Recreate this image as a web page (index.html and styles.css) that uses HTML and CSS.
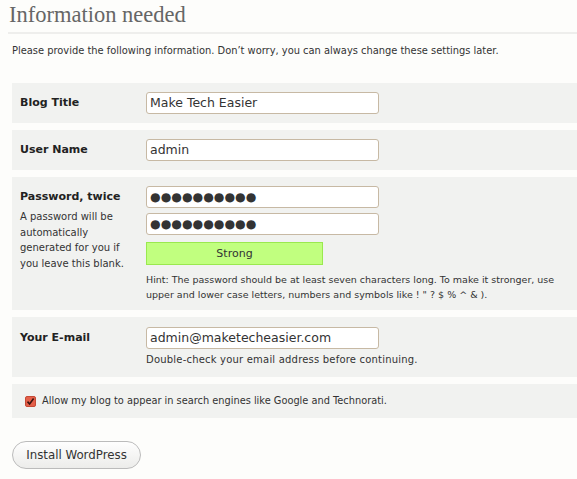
FILE: index.html
```html
<!DOCTYPE html>
<html>
<head>
<meta charset="utf-8">
<link rel="stylesheet" href="styles.css">
</head>
<body>
<h1 class="title">Information needed</h1>
<p class="intro">Please provide the following information. Don’t worry, you can always change these settings later.</p>
<form class="form">
  <div class="row">
    <div class="label"><span class="lbl">Blog Title</span></div>
    <div class="field"><input class="text" type="text" value="Make Tech Easier"></div>
  </div>
  <div class="row">
    <div class="label"><span class="lbl">User Name</span></div>
    <div class="field"><input class="text" type="text" value="admin"></div>
  </div>
  <div class="row row-pass">
    <div class="label">
      <span class="lbl">Password, twice</span>
      <p class="desc">A password will be automatically generated for you if you leave this blank.</p>
    </div>
    <div class="field">
      <input class="text dots" type="text" value="●●●●●●●●●●">
      <input class="text dots" type="text" value="●●●●●●●●●●">
      <div class="strength">Strong</div>
      <p class="hint">Hint: The password should be at least seven characters long. To make it stronger, use upper and lower case letters, numbers and symbols like ! " ? $ % ^ &amp; ).</p>
    </div>
  </div>
  <div class="row row-mail">
    <div class="label"><span class="lbl">Your E-mail</span></div>
    <div class="field">
      <input class="text" type="text" value="admin@maketecheasier.com">
      <p class="hint-mail">Double-check your email address before continuing.</p>
    </div>
  </div>
  <div class="row row-check">
    <label class="check">
      <span class="box"><svg width="9" height="9" viewBox="0 0 9 9"><path d="M1.5 4.6 L3.6 7 L7.6 1.6" fill="none" stroke="#3a1410" stroke-width="1.6"/></svg></span>
      Allow my blog to appear in search engines like Google and Technorati.
    </label>
  </div>
  <div class="actions"><button type="button" class="btn">Install WordPress</button></div>
</form>
</body>
</html>
```
FILE: styles.css
```css
html, body {
  margin: 0;
  padding: 0;
  background: #fdfdfb;
}
body {
  font-family: "DejaVu Sans", Verdana, sans-serif;
  color: #333;
  font-size: 11px;
}
.title {
  font-family: "Liberation Serif", Georgia, serif;
  font-weight: normal;
  font-size: 22.5px;
  color: #666;
  margin: 0 0 0 8px;
  padding: 3px 0 5px 1px;
  line-height: 24px;
  border-bottom: 2px solid #eeeeec;
}
.intro {
  margin: 9px 0 0 12px;
  line-height: 16px;
  font-size: 9.9px;
}
.form {
  margin: 24px 0 0 12px;
}
.row {
  display: flex;
  background: #f1f2f0;
  padding: 9px 8px;
  margin-bottom: 7px;
}
.label {
  width: 126px;
  flex: none;
}
.lbl {
  display: block;
  font-weight: bold;
  font-size: 11px;
  line-height: 22px;
  color: #222;
}
.desc {
  margin: 1px 0 0;
  font-size: 10px;
  line-height: 15.5px;
  letter-spacing: 0;
  width: 120px;
}
.field {
  display: flex;
  flex-direction: column;
  gap: 5px;
}
.text {
  box-sizing: border-box;
  width: 233px;
  height: 22px;
  margin: 0;
  padding: 0 3px 1px;
  border: 1px solid #c7b9a4;
  border-radius: 3px;
  background: #fff;
  font-family: "DejaVu Sans", sans-serif;
  font-size: 12.5px;
  color: #333;
  outline: none;
}
.dots {
  font-size: 12.2px;
  letter-spacing: 0;
  padding-bottom: 0;
}
.strength {
  box-sizing: border-box;
  width: 177px;
  height: 23px;
  margin-top: 2px;
  background: #c1ff7f;
  border: 1px solid #9ae94f;
  text-align: center;
  line-height: 21px;
  font-size: 11px;
  color: #333;
}
.hint {
  margin: 2px 0 0;
  font-size: 9.5px;
  line-height: 15px;
  letter-spacing: 0;
  width: 420px;
}
.hint-mail {
  margin: -2px 0 0;
  font-size: 10px;
  line-height: 15px;
  letter-spacing: 0.2px;
}
.row-pass {
  padding-bottom: 8px;
}
.row-mail {
  padding: 10px 8px 10px;
}
.row-check {
  padding: 11px 13px;
}
.check {
  display: flex;
  align-items: center;
  gap: 6px;
  font-size: 9.8px;
  line-height: 12px;
}
.box {
  box-sizing: border-box;
  width: 11px;
  height: 11px;
  border-radius: 2px;
  background: #e4604a;
  border: 1px solid #c54a36;
  display: flex;
  align-items: center;
  justify-content: center;
}
.actions {
  padding-top: 16px;
}
.btn {
  box-sizing: border-box;
  width: 129px;
  height: 28px;
  border: 1px solid #bbb;
  border-radius: 14px;
  background: linear-gradient(#fefefe, #ececea);
  font-family: "DejaVu Sans", sans-serif;
  font-size: 11.8px;
  color: #333;
  padding: 0;
}
```
